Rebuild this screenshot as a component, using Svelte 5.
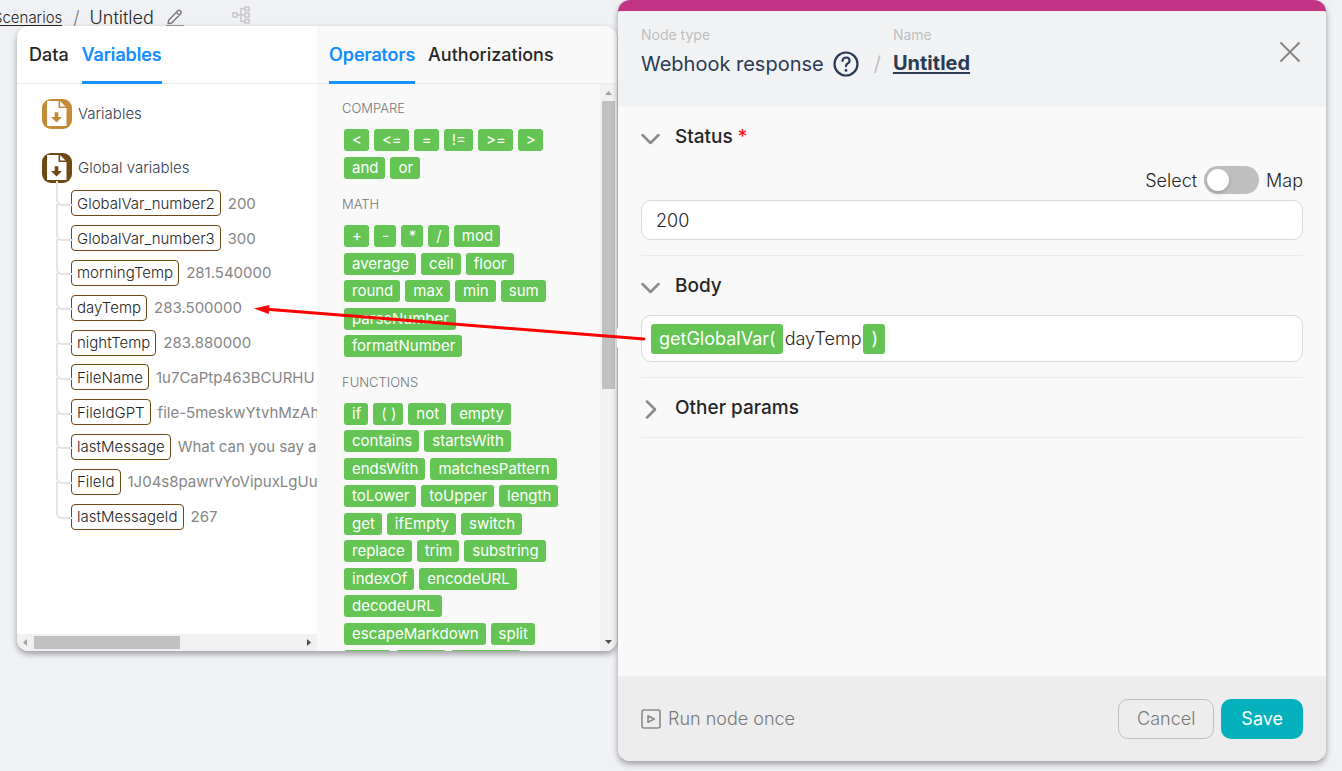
<script>
  const globals = [
    ['GlobalVar_number2', '200'],
    ['GlobalVar_number3', '300'],
    ['morningTemp', '281.540000'],
    ['dayTemp', '283.500000'],
    ['nightTemp', '283.880000'],
    ['FileName', '1u7CaPtp463BCURHU'],
    ['FileIdGPT', 'file-5meskwYtvhMzAh'],
    ['lastMessage', 'What can you say a'],
    ['FileId', '1J04s8pawrvYoVipuxLgUu'],
    ['lastMessageId', '267'],
  ];

  const groups = [
    { id: 'compare', title: 'COMPARE', items: ['<', '<=', '=', '!=', '>=', '>', 'and', 'or'] },
    {
      id: 'math',
      title: 'MATH',
      items: ['+', '-', '*', '/', 'mod', 'average', 'ceil', 'floor', 'round', 'max', 'min', 'sum', 'parseNumber', 'formatNumber'],
    },
    {
      id: 'functions',
      title: 'FUNCTIONS',
      items: [
        'if', '( )', 'not', 'empty', 'contains', 'startsWith', 'endsWith', 'matchesPattern', 'toLower', 'toUpper',
        'length', 'get', 'ifEmpty', 'switch', 'replace', 'trim', 'substring', 'indexOf', 'encodeURL', 'decodeURL',
        'escapeMarkdown', 'split',
      ],
      // widths of the chips that only peek in at the scroll edge
      peek: [47, 50, 70],
    },
  ];

  let mapMode = $state(false);
  let status = $state('200');
</script>

{#snippet fileIcon(color)}
  <svg class="file-icon" width="30" height="30" viewBox="0 0 30 30" aria-hidden="true">
    <rect width="30" height="30" rx="9" fill={color} />
    <path d="M5 2h13l6.500 6.500V27H5z" fill="#fff" />
    <path d="M17.300 1.500v6.800H25" fill="none" stroke={color} stroke-width="1.600" />
    <path d="M14.500 13.300v6" stroke={color} stroke-width="3.600" />
    <path d="M9 18h11l-5.500 5.500z" fill={color} />
  </svg>
{/snippet}

{#snippet chevron(open)}
  <svg class="chevron" class:closed={!open} width="20" height="12" viewBox="0 0 20 12" aria-hidden="true">
    <path d="M1.500 2l8 8 8-8" fill="none" stroke="#8c8c8c" stroke-width="2.500" stroke-linecap="round" stroke-linejoin="round" />
  </svg>
{/snippet}

<div class="page">
  <div class="side">
    <nav class="crumbs" aria-label="Breadcrumb">
      <a href="#scenarios">Scenarios</a>
      <span class="sep">/</span>
      <span class="crumb-name">Untitled</span>
      <button class="edit" aria-label="Rename">
        <svg width="18" height="18" viewBox="0 0 18 18">
          <path d="M2.500 12.500L11.500 3q1.500-1.500 3 0t0 3L5.500 15l-3.500.700z M10.500 4.500l3 3" fill="none" stroke="#777" stroke-width="1.300" stroke-linejoin="round" />
          <path d="M0 17.500h18" stroke="#999" />
        </svg>
      </button>
      <svg class="tree-icon" width="18" height="18" viewBox="0 0 18 18" aria-hidden="true">
        <g fill="none" stroke="#c6c6c8" stroke-width="1.500">
          <rect x="1" y="7" width="4" height="4" />
          <rect x="13" y="1" width="4" height="3.500" />
          <rect x="13" y="7" width="4" height="4" />
          <rect x="13" y="13.500" width="4" height="3.500" />
          <path d="M5 9h8M13 2.500H9v13h4" />
        </g>
      </svg>
    </nav>

    <section class="picker">
      <div class="pane data">
        <div class="tabs" role="tablist">
          <button role="tab" aria-selected="false">Data</button>
          <button role="tab" aria-selected="true">Variables</button>
        </div>
        <div class="tree">
          <div class="branch">{@render fileIcon('#c48a35')}<span>Variables</span></div>
          <div class="branch">{@render fileIcon('#6e4913')}<span>Global variables</span></div>
          <ul class="vars">
            {#each globals as [name, value]}
              <li><button class="var">{name}</button><span class="value">{value}</span></li>
            {/each}
          </ul>
        </div>
        <div class="hbar" aria-hidden="true">
          <svg width="17" height="17" viewBox="0 0 17 17"><path d="M10 5v7L6 8.500z" fill="#a3a3a3" /></svg>
          <div class="track"><div class="thumb"></div></div>
          <svg width="17" height="17" viewBox="0 0 17 17"><path d="M7 5v7l4-3.500z" fill="#505050" /></svg>
        </div>
      </div>

      <div class="pane ops">
        <div class="tabs" role="tablist">
          <button role="tab" aria-selected="true">Operators</button>
          <button role="tab" aria-selected="false">Authorizations</button>
        </div>
        <div class="ops-body">
          <div class="groups">
            {#each groups as group}
              <h3>{group.title}</h3>
              <div class="chips {group.id}">
                {#each group.items as item}
                  <button class="chip">{item}</button>
                {/each}
                {#each group.peek ?? [] as width}
                  <span class="chip" style="width: {width}px"></span>
                {/each}
              </div>
            {/each}
          </div>
          <div class="vbar" aria-hidden="true">
            <svg width="17" height="17" viewBox="0 0 17 17"><path d="M5 11h7L8.500 7z" fill="#a3a3a3" /></svg>
            <div class="track"><div class="thumb"></div></div>
            <svg width="17" height="17" viewBox="0 0 17 17"><path d="M5 6h7l-3.500 4z" fill="#505050" /></svg>
          </div>
        </div>
      </div>
    </section>
  </div>

  <main class="drawer">
    <header>
      <div class="field">
        <span class="caption">Node type</span>
        <div class="title">
          <span>Webhook response</span>
          <button class="help" aria-label="Help">
            <svg width="26" height="26" viewBox="0 0 26 26" fill="none" stroke="#2b3a55" stroke-width="2.200" stroke-linecap="round">
              <circle cx="13" cy="13" r="11.500" />
              <path d="M9.500 10q.3-3.500 3.700-3.500 3.400.2 3.400 3.200 0 1.600-1.700 2.600-1.900 1-1.900 2.900" />
              <path d="M13 19.300v.1" stroke-width="2.800" />
            </svg>
          </button>
          <span class="slash">/</span>
        </div>
      </div>
      <div class="field">
        <span class="caption">Name</span>
        <a class="name" href="#rename">Untitled</a>
      </div>
      <button class="close" aria-label="Close">
        <svg width="22" height="22" viewBox="0 0 22 22"><path d="M1.500 1.500l19 19M20.500 1.500l-19 19" stroke="#868686" stroke-width="2" /></svg>
      </button>
    </header>

    <div class="content">
      <section class="status">
        <h2>{@render chevron(true)}<label for="status">Status <em>*</em></label></h2>
        <div class="mode">
          <span>Select</span>
          <input type="checkbox" aria-label="Map" bind:checked={mapMode} />
          <span>Map</span>
        </div>
        <input id="status" class="box" type="text" bind:value={status} />
      </section>
      <section class="body">
        <h2>{@render chevron(true)}<span id="body-label">Body</span></h2>
        <div class="box formula" role="textbox" tabindex="0" aria-labelledby="body-label">
          <span class="token">getGlobalVar(</span><span>dayTemp</span><span class="token">)</span>
        </div>
      </section>
      <section class="other">
        <h2>{@render chevron(false)}<span>Other params</span></h2>
      </section>
    </div>

    <footer>
      <button class="run">
        <svg width="20" height="20" viewBox="0 0 20 20" fill="none" stroke="#8a8a8a" stroke-width="1.600" stroke-linejoin="round">
          <rect x="1" y="1" width="18" height="18" rx="2" />
          <path d="M7 6.800l6.300 3.200L7 13.200z" />
        </svg>
        <span>Run node once</span>
      </button>
      <button class="cancel">Cancel</button>
      <button class="save">Save</button>
    </footer>
  </main>

  <svg class="pointer" width="400" height="50" viewBox="0 0 400 50" aria-hidden="true">
    <path d="M367 28l9 10-9 10z" fill="#fff" />
    <path d="M394 39L14 9" stroke="#f00" stroke-width="3" stroke-linecap="round" />
    <path d="M4 8.500L19.500 5l-.7 9z" fill="#f00" />
  </svg>
</div>

<style>
  :global(body) {
    background: #f0f1f5;
  }
  .page,
  .page * {
    box-sizing: border-box;
  }
  .page {
    position: relative;
    display: flex;
    height: 100vh;
    padding: 0 16px 10px 0;
    overflow: hidden;
    font-family: Inter, sans-serif;
    font-size: 15px;
    font-weight: 300;
    color: #262626;
  }
  button {
    margin: 0;
    padding: 0;
    border: 0;
    background: none;
    font: inherit;
    color: inherit;
  }
  svg {
    display: block;
    flex: none;
  }

  .side {
    display: flex;
    flex-direction: column;
    flex: none;
    width: 618px;
    padding: 0 1px 110px 17px;
  }
  .crumbs {
    display: flex;
    align-items: flex-end;
    flex: none;
    height: 26px;
    margin-left: -24px;
    line-height: 14px;
    white-space: nowrap;
  }
  .crumbs a {
    border-bottom: 1px solid #262626;
    color: inherit;
    text-decoration: none;
  }
  .sep {
    margin: 0 10px 0 11px;
    color: #777;
    font-size: 18px;
    line-height: 16px;
  }
  .crumb-name {
    font-size: 18px;
    line-height: 16px;
  }
  .edit {
    margin-left: 12px;
  }
  .tree-icon {
    margin: 0 0 2px 48px;
  }

  .picker {
    display: flex;
    flex: 1;
    min-height: 0;
    overflow: hidden;
    border-radius: 12px;
    box-shadow: 0 3px 6px rgba(0, 0, 0, 0.36);
  }
  .pane {
    display: flex;
    flex-direction: column;
    flex: 1;
    min-width: 0;
    background: #fff;
  }
  .ops {
    background: #f9f9f9;
  }
  .tabs {
    display: flex;
    flex: none;
    gap: 13px;
    height: 58px;
    padding: 0 12px;
    border-bottom: 1px solid #ebebeb;
    font-size: 18px;
    font-weight: 500;
  }
  .tabs button {
    height: 58px;
    padding-top: 1px;
    border-bottom: 3px solid transparent;
  }
  .tabs [aria-selected='true'] {
    border-color: #1890ff;
    color: #1890ff;
    text-shadow: 0 0 0 currentColor;
  }

  .tree {
    flex: 1;
    min-height: 0;
    padding: 15px 0 0 25px;
    overflow: hidden;
  }
  .branch {
    display: flex;
    align-items: center;
    gap: 6px;
    height: 30px;
    margin-bottom: 24px;
    color: #333d50;
  }
  .branch span {
    padding-bottom: 2px;
  }
  .branch:nth-child(2) {
    margin-bottom: 0;
  }
  .vars {
    display: grid;
    grid-auto-rows: 1fr;
    height: 348px;
    margin: 3px 0 0 14px;
    padding: 0;
    list-style: none;
  }
  .vars li {
    position: relative;
    display: flex;
    align-items: center;
    gap: 7px;
    padding-left: 15px;
    white-space: nowrap;
  }
  .vars li::before {
    content: '';
    position: absolute;
    left: 0;
    top: -17px;
    bottom: 15px;
    width: 15px;
    border-left: 2px solid #e3e3e3;
    border-bottom: 2px solid #e3e3e3;
    border-bottom-left-radius: 6px;
  }
  .vars li:first-child::before {
    top: -5px;
  }
  .var {
    height: 26px;
    padding: 0 5px;
    border: 1px solid #6e4913;
    border-radius: 4px;
    background: #fff;
  }
  .value {
    color: #868686;
    font-weight: 400;
  }

  .hbar,
  .vbar {
    display: flex;
    flex: none;
    background: #f1f1f1;
  }
  .vbar {
    flex-direction: column;
    width: 17px;
  }
  .track {
    flex: 1;
    min-height: 0;
  }
  .thumb {
    background: #c1c1c1;
  }
  .hbar .thumb {
    width: 55%;
    height: 13px;
    margin-top: 2px;
  }
  .vbar .thumb {
    width: 13px;
    height: 54%;
    margin-left: 2px;
  }

  .ops-body {
    display: flex;
    flex: 1;
    min-height: 0;
  }
  .groups {
    flex: 1;
    min-width: 0;
    padding: 14px 34px 0 25px;
    overflow: hidden;
  }
  h3 {
    margin: 0 0 11px;
    color: #777;
    font-size: 13px;
    font-weight: 300;
    line-height: 20px;
  }
  .chips {
    display: flex;
    flex-wrap: wrap;
    align-content: space-between;
    column-gap: 5px;
    margin: 0 0 15px 2px;
  }
  .compare {
    height: 50px;
  }
  .math {
    height: 132px;
  }
  .functions {
    height: 269px;
  }
  .chip {
    height: 22px;
    padding: 0 7px 0 8px;
    border-radius: 3px;
    background: #64c454;
    color: #fff;
    font-weight: 400;
    line-height: 22px;
  }

  .drawer {
    display: flex;
    flex-direction: column;
    flex: 1;
    min-width: 0;
    overflow: hidden;
    border-top: 11px solid #c23584;
    border-radius: 12px;
    background: #f9f9f9;
    box-shadow: 0 3px 6px rgba(0, 0, 0, 0.36);
    font-size: 18px;
  }
  header {
    display: flex;
    flex: none;
    height: 96px;
    padding: 12px 23px 0;
    background: #f1f2f4;
    color: #2b3a55;
    font-weight: 400;
  }
  .caption {
    display: block;
    height: 24px;
    color: #bfbfbf;
    font-size: 14px;
    line-height: 23px;
  }
  .title {
    display: flex;
    align-items: center;
    height: 34px;
    font-size: 20px;
  }
  .help {
    margin-left: 9px;
  }
  .slash {
    margin: 0 12px 0 15px;
    color: #bfbfbf;
  }
  .name {
    color: inherit;
    font-size: 20px;
    font-weight: 700;
    line-height: 32px;
    text-underline-offset: 2px;
  }
  .close {
    align-self: flex-start;
    margin: 18px 2px 0 auto;
  }

  .content {
    flex: 1;
    min-height: 0;
    padding: 0 23px;
  }
  .content section {
    padding: 15px 0;
    border-bottom: 1px solid #ebebeb;
  }
  .content .other {
    padding-bottom: 14px;
  }
  h2 {
    display: flex;
    align-items: center;
    gap: 14px;
    margin: 0;
    font-size: 19px;
    font-weight: 500;
    line-height: 30px;
  }
  .chevron {
    margin-top: 4px;
  }
  .chevron.closed {
    margin-top: 2px;
    transform: rotate(-90deg);
  }
  em {
    color: #f00;
    font-style: normal;
    font-weight: 400;
  }
  .mode {
    display: flex;
    align-items: center;
    justify-content: flex-end;
    gap: 7px;
    height: 28px;
    margin: 14px 0 6px;
  }
  .mode input {
    appearance: none;
    width: 55px;
    height: 28px;
    margin: 0;
    padding: 3px;
    border-radius: 14px;
    background: #bfbfbf;
  }
  .mode input::before {
    content: '';
    display: block;
    width: 22px;
    height: 22px;
    border-radius: 50%;
    background: #fff;
    box-shadow: 0 2px 4px rgba(0, 35, 11, 0.2);
  }
  .mode input:checked::before {
    margin-left: auto;
  }
  .box {
    display: block;
    width: 100%;
    height: 40px;
    padding: 0 14px;
    border: 1px solid #d9d9d9;
    border-radius: 10px;
    background: #fff;
    font: inherit;
    color: inherit;
  }
  .formula {
    display: flex;
    align-items: center;
    gap: 2px;
    height: 47px;
    margin-top: 14px;
    padding: 0 9px;
  }
  .token {
    height: 30px;
    padding: 0 7px 0 8px;
    border-radius: 3px;
    background: #64c454;
    color: #fff;
    font-weight: 400;
    line-height: 30px;
  }

  footer {
    display: flex;
    align-items: center;
    flex: none;
    gap: 7px;
    height: 85px;
    padding: 0 23px;
    background: #ededed;
  }
  .run {
    display: flex;
    align-items: center;
    gap: 7px;
    margin-right: auto;
    color: #777;
  }
  .cancel,
  .save {
    height: 40px;
    border-radius: 10px;
  }
  .cancel {
    padding: 0 18px;
    border: 1px solid #bfbfbf;
    color: #777;
  }
  .save {
    padding: 0 20px;
    background: #05b1bd;
    color: #fff;
    font-weight: 400;
  }

  .pointer {
    position: absolute;
    left: 250px;
    top: 300px;
    pointer-events: none;
  }
</style>
